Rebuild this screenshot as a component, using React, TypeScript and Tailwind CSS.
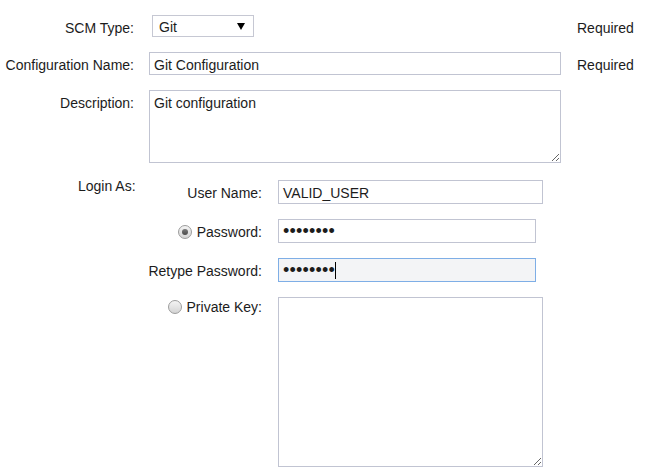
import React from "react";

function Radio({ checked }: { checked?: boolean }) {
  return (
    <span className="inline-flex items-center justify-center w-[14px] h-[14px] rounded-full border border-[#9c9c9c] bg-gradient-to-b from-[#f4f4f4] to-[#d4d4d4] mr-[5px] shrink-0">
      {checked && <span className="w-[6px] h-[6px] rounded-full bg-gradient-to-b from-[#7a7a7a] to-[#4a4a4a]" />}
    </span>
  );
}

export default function App() {
  return (
    <div
      className="w-[653px] h-[473px] bg-white text-[14px] leading-[16px] text-[#1c1c1c] pt-[15px]"
      style={{ fontFamily: '"Liberation Sans", Arial, sans-serif' }}
    >
      {/* SCM Type */}
      <div className="flex items-center h-[22px]">
        <div className="w-[134px] text-right pt-[4px]">SCM Type:</div>
        <div className="ml-[18px] w-[102px] h-[22px] border border-[#c6c8d3] bg-white flex items-center justify-between pl-[6px] pr-[8px]">
          <span className="pt-[2px]">Git</span>
          <svg width="8" height="7" viewBox="0 0 8 7">
            <path d="M0 0 H8 L4 7 Z" fill="#000" />
          </svg>
        </div>
        <div className="ml-[323px] pt-[4px]">Required</div>
      </div>

      {/* Configuration Name */}
      <div className="flex items-center h-[23px] mt-[15px]">
        <div className="w-[134px] text-right pt-[3px]">Configuration Name:</div>
        <div className="ml-[15px] w-[412px] h-[23px] border border-[#c1c4d2] flex items-center pl-[4px] pt-[2px]">
          Git Configuration
        </div>
        <div className="ml-[16px] pt-[3px]">Required</div>
      </div>

      {/* Description */}
      <div className="flex items-start mt-[15px]">
        <div className="w-[134px] text-right pt-[5px]">Description:</div>
        <textarea
          readOnly
          defaultValue="Git configuration"
          className="ml-[15px] w-[412px] h-[73px] border border-[#c1c4d2] pl-[4px] pt-[4px] outline-none resize"
          style={{ fontFamily: '"Liberation Sans", Arial, sans-serif', fontSize: 14, lineHeight: "16px" }}
        />
      </div>

      {/* Login As */}
      <div className="flex items-start mt-[17px]">
        <div className="w-[150px] pl-[78px] mt-[-2px]">Login As:</div>
        <div className="flex flex-col gap-[15px]">
          <div className="flex items-center h-[24px]">
            <div className="w-[112px] text-right pt-[1px]">User Name:</div>
            <div className="ml-[16px] w-[265px] h-[24px] border border-[#c1c4d2] flex items-center pl-[4px] pt-[2px]">
              VALID_USER
            </div>
          </div>
          <div className="flex items-center h-[24px]">
            <div className="w-[112px] flex items-center justify-end pt-[1px]">
              <Radio checked />
              <span>Password:</span>
            </div>
            <div className="ml-[16px] w-[258px] h-[24px] border border-[#c1c4d2] flex items-center pl-[4px]">
              <span className="text-[18px] leading-[18px] tracking-[0.2px]">••••••••</span>
            </div>
          </div>
          <div className="flex items-center h-[24px]">
            <div className="w-[112px] flex justify-end whitespace-nowrap pt-[1px]">
              <span>Retype Password:</span>
            </div>
            <div className="ml-[16px] w-[258px] h-[24px] border border-[#7eaee6] bg-[#f3f4f6] flex items-center pl-[4px]">
              <span className="text-[18px] leading-[18px] tracking-[0.2px]">••••••••</span>
              <span className="w-[1px] h-[17px] bg-black" />
            </div>
          </div>
          <div className="flex items-start">
            <div className="w-[112px] flex items-center justify-end pt-[2px]">
              <Radio />
              <span>Private Key:</span>
            </div>
            <textarea
              readOnly
              className="ml-[16px] w-[265px] h-[170px] border border-[#c1c4d2] outline-none resize"
            />
          </div>
        </div>
      </div>
    </div>
  );
}
